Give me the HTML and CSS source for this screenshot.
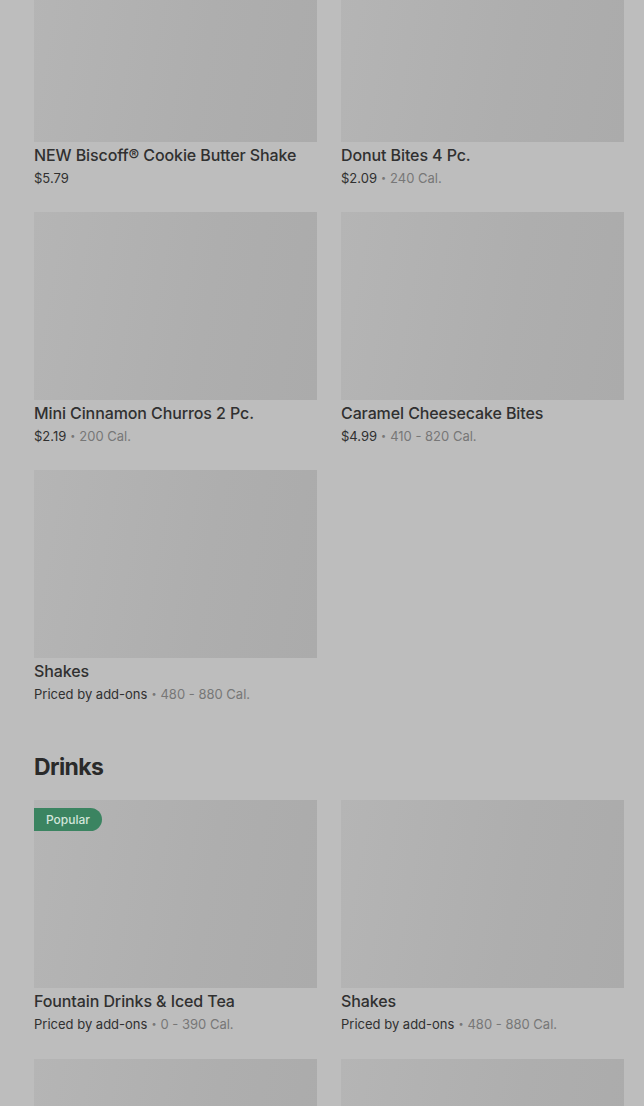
FILE: index.html
```html
<!DOCTYPE html>
<html lang="en">
<head>
<meta charset="utf-8">
<title>Menu</title>
<link rel="stylesheet" href="styles.css">
</head>
<body>
<main class="page">
  <section class="section first">
    <div class="grid">
      <article class="card">
        <div class="thumb"></div>
        <h3 class="name">NEW Biscoff® Cookie Butter Shake</h3>
        <p class="meta"><span class="price">$5.79</span></p>
      </article>
      <article class="card">
        <div class="thumb"></div>
        <h3 class="name">Donut Bites 4 Pc.</h3>
        <p class="meta"><span class="price">$2.09</span><span class="dot">•</span><span class="cal">240 Cal.</span></p>
      </article>
      <article class="card">
        <div class="thumb"></div>
        <h3 class="name">Mini Cinnamon Churros 2 Pc.</h3>
        <p class="meta"><span class="price">$2.19</span><span class="dot">•</span><span class="cal">200 Cal.</span></p>
      </article>
      <article class="card">
        <div class="thumb"></div>
        <h3 class="name">Caramel Cheesecake Bites</h3>
        <p class="meta"><span class="price">$4.99</span><span class="dot">•</span><span class="cal">410 - 820 Cal.</span></p>
      </article>
      <article class="card">
        <div class="thumb"></div>
        <h3 class="name">Shakes</h3>
        <p class="meta"><span class="price">Priced by add-ons</span><span class="dot">•</span><span class="cal">480 - 880 Cal.</span></p>
      </article>
    </div>
  </section>

  <section class="section">
    <h2 class="heading">Drinks</h2>
    <div class="grid">
      <article class="card">
        <div class="thumb"><span class="badge">Popular</span></div>
        <h3 class="name">Fountain Drinks &amp; Iced Tea</h3>
        <p class="meta"><span class="price">Priced by add-ons</span><span class="dot">•</span><span class="cal">0 - 390 Cal.</span></p>
      </article>
      <article class="card">
        <div class="thumb"></div>
        <h3 class="name">Shakes</h3>
        <p class="meta"><span class="price">Priced by add-ons</span><span class="dot">•</span><span class="cal">480 - 880 Cal.</span></p>
      </article>
      <article class="card">
        <div class="thumb"></div>
      </article>
      <article class="card">
        <div class="thumb"></div>
      </article>
    </div>
  </section>
</main>
</body>
</html>
```

FILE: styles.css
```css
html, body {
  margin: 0;
  padding: 0;
  background: #bdbdbd;
  overflow: hidden;
}

body {
  font-family: Inter, "Noto Sans", Arial, sans-serif;
  color: #2e2e2e;
}

.page {
  padding: 0 20px 0 34px;
  margin-top: -46px;
}

.section + .section {
  margin-top: 46px;
}

.grid {
  display: grid;
  grid-template-columns: 283px 283px;
  column-gap: 24px;
  row-gap: 23px;
}

.section + .section .grid {
  row-gap: 24px;
}

.card {
  display: flex;
  flex-direction: column;
}

.thumb {
  position: relative;
  height: 188px;
  background: linear-gradient(100deg, #b5b5b5 0%, #aeaeae 60%, #ababab 100%);
}

.name {
  margin: 3px 0 0;
  font-size: 16px;
  line-height: 20px;
  font-weight: 500;
  color: #303030;
  letter-spacing: -0.1px;
}

.meta {
  margin: 3px 0 0;
  font-size: 13px;
  line-height: 21px;
  white-space: nowrap;
}

.price {
  color: #303030;
}

.dot {
  display: inline-block;
  margin: 0 4px;
  color: #777777;
  font-size: 9px;
  line-height: 1;
  vertical-align: 2px;
}

.cal {
  color: #777777;
}

.heading {
  margin: 0 0 17px;
  font-size: 23px;
  line-height: 32px;
  font-weight: 700;
  color: #2a2a2a;
  letter-spacing: -0.6px;
}

.badge {
  position: absolute;
  top: 8px;
  left: 0;
  height: 23px;
  padding: 0 12px;
  display: flex;
  align-items: center;
  background: #3b8461;
  color: #d3e6db;
  font-size: 12px;
  font-weight: 500;
  border-radius: 0 12px 12px 0;
}
```
